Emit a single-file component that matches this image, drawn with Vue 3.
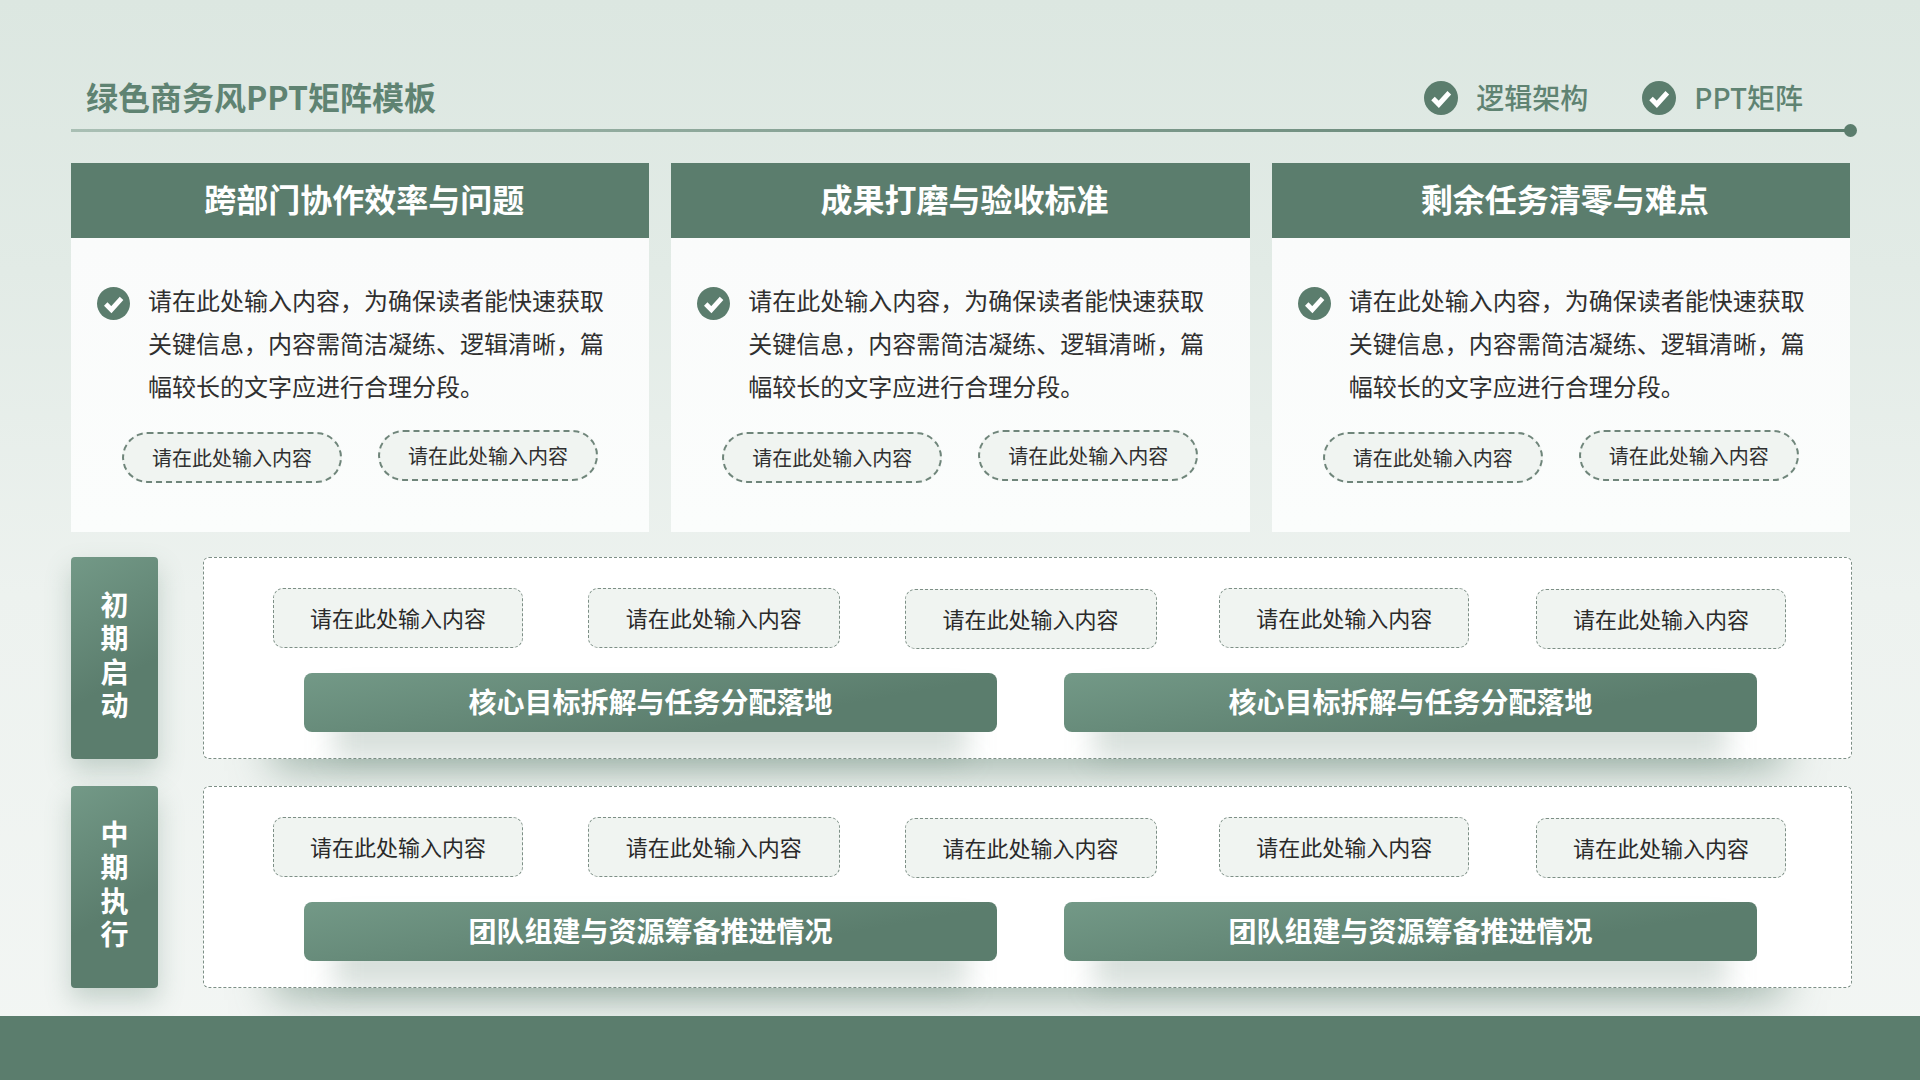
<template>
  <div class="page">
    <div class="top">
      <div class="header">
        <h1 class="title">绿色商务风PPT矩阵模板</h1>
        <div class="tags">
          <div v-for="tag in tags" :key="tag" class="tag">
            <svg class="check tag-check" viewBox="0 0 34 34">
              <circle cx="17" cy="17" r="17" fill="#5b7d6d" />
              <path d="M9 17.5l5.8 5.8 10.5-11.5" fill="none" stroke="#fff" stroke-width="5" />
            </svg>
            <span>{{ tag }}</span>
          </div>
        </div>
      </div>
      <div class="header-line"></div>
    </div>

    <div class="cards">
      <div v-for="card in cards" :key="card" class="card">
        <div class="card-head">{{ card }}</div>
        <div class="card-body">
          <div class="desc">
            <svg class="check desc-check" viewBox="0 0 34 34">
              <circle cx="17" cy="17" r="17" fill="#5b7d6d" />
              <path d="M9 17.5l5.8 5.8 10.5-11.5" fill="none" stroke="#fff" stroke-width="5" />
            </svg>
            <p>请在此处输入内容，为确保读者能快速获取关键信息，内容需简洁凝练、逻辑清晰，篇幅较长的文字应进行合理分段。</p>
          </div>
          <div class="pills">
            <span class="pill pill-low">请在此处输入内容</span>
            <span class="pill">请在此处输入内容</span>
          </div>
        </div>
      </div>
    </div>

    <div class="rows">
      <div v-for="row in rows" :key="row.label" class="row">
        <div class="row-label">
          <span>{{ row.label }}</span>
        </div>
        <div class="row-box">
          <div class="items">
            <div v-for="n in 5" :key="n" class="item" :class="'item-' + n">请在此处输入内容</div>
          </div>
          <div class="banners">
            <div class="banner">{{ row.banner }}</div>
            <div class="banner">{{ row.banner }}</div>
          </div>
        </div>
      </div>
    </div>

    <div class="footer"></div>
  </div>
</template>

<script setup>
const tags = ['逻辑架构', 'PPT矩阵']

const cards = ['跨部门协作效率与问题', '成果打磨与验收标准', '剩余任务清零与难点']

const rows = [
  { label: '初期启动', banner: '核心目标拆解与任务分配落地' },
  { label: '中期执行', banner: '团队组建与资源筹备推进情况' }
]
</script>

<style>
html,
body {
  margin: 0;
  background: #eef3f0;
}
</style>

<style scoped>
.page {
  position: relative;
  width: 1920px;
  height: 1080px;
  overflow: hidden;
  display: flex;
  flex-direction: column;
  background: linear-gradient(180deg, #dce7e1 0%, #e2ebe6 25%, #edf2ef 55%, #f3f6f4 100%);
  font-family: "Noto Sans CJK SC", "Noto Sans", sans-serif;
  text-spacing-trim: space-all;
}

.top {
  margin: 0 69px 0 71px;
  padding-top: 70px;
}

.header {
  height: 59px;
  display: flex;
  justify-content: space-between;
  padding: 0 48px 0 15px;
}

.title {
  margin: 0;
  font-size: 32px;
  font-weight: 700;
  line-height: 52px;
  color: #5f8372;
}

.tags {
  display: flex;
  gap: 54px;
}

.tag {
  display: flex;
  align-items: center;
  gap: 18px;
  height: 56px;
  font-size: 28px;
  font-weight: 500;
  color: #5f8372;
}

.tag span {
  padding-bottom: 2px;
}

.check {
  display: block;
  flex-shrink: 0;
}

.tag-check {
  width: 34px;
  height: 34px;
}

.header-line {
  position: relative;
  height: 3px;
  background: linear-gradient(90deg, #a9bfb4 0%, #5b7d6d 100%);
}

.header-line::after {
  content: "";
  position: absolute;
  right: -6px;
  top: -5px;
  width: 13px;
  height: 13px;
  border-radius: 50%;
  background: #5b7d6d;
}

.cards {
  margin: 31px 70px 0 71px;
  display: flex;
  gap: 22px;
}

.card {
  flex: 1;
  height: 369px;
  display: flex;
  flex-direction: column;
}

.card-head {
  height: 75px;
  padding: 0 0 5px 8px;
  box-sizing: border-box;
  display: flex;
  align-items: center;
  justify-content: center;
  background: #5b7d6d;
  color: #fff;
  font-size: 32px;
  font-weight: 700;
}

.card-body {
  flex: 1;
  padding: 40px 0 0 26px;
  background: linear-gradient(180deg, #fafbfb 0%, #fbfdfc 100%);
}

.desc {
  display: flex;
  gap: 18px;
}

.desc p {
  margin: 0;
  width: 460px;
  font-size: 24px;
  line-height: 43px;
  color: #2f2f2f;
}

.desc-check {
  width: 33px;
  height: 33px;
  margin-top: 9px;
}

.pills {
  display: flex;
  gap: 36px;
  margin: 23px 0 0 25px;
}

.pill {
  width: 220px;
  height: 51px;
  box-sizing: border-box;
  border: 2px dashed #6f857a;
  border-radius: 26px;
  background: #f0f4f1;
  display: flex;
  align-items: center;
  justify-content: center;
  font-size: 20px;
  color: #2f2f2f;
}

.pill-low {
  margin-top: 2px;
}

.rows {
  margin: 25px 70px 0 71px;
  display: flex;
  flex-direction: column;
  gap: 27px;
}

.row {
  height: 202px;
  display: flex;
  gap: 45px;
}

.row-label {
  width: 87px;
  flex-shrink: 0;
  border-radius: 4px;
  background: linear-gradient(150deg, #739987 0%, #5b7d6d 60%);
  box-shadow: 0 12px 26px rgba(91, 125, 109, 0.3);
  display: flex;
  align-items: center;
  justify-content: center;
  color: #fff;
  font-size: 28px;
  font-weight: 700;
}

.row-label span {
  writing-mode: vertical-rl;
  text-orientation: upright;
  letter-spacing: 5.5px;
}

.row-box {
  position: relative;
  z-index: 0;
  flex: 1;
  box-sizing: border-box;
  padding: 30px 65px 0 69px;
  border: 1px dashed #7d8f86;
  border-radius: 6px;
  background: #fff;
  box-shadow: 0 82px 40px -70px rgba(91, 125, 109, 0.5);
}

.items {
  display: flex;
  justify-content: space-between;
  align-items: flex-start;
}

.item {
  width: 250px;
  height: 60px;
  box-sizing: border-box;
  padding-bottom: 3px;
  border: 1px dashed #7d8f86;
  border-radius: 10px;
  background: #f0f4f1;
  display: flex;
  align-items: center;
  justify-content: center;
  font-size: 22px;
  color: #2a2a2a;
}

.item-2,
.item-3 {
  width: 252px;
}

.item-3,
.item-5 {
  margin-top: 1px;
}

.item-4 {
  position: relative;
  left: -2px;
}

.banners {
  display: flex;
  gap: 67px;
  margin: 24px 29px 0 31px;
}

.banner {
  position: relative;
  width: 693px;
  height: 59px;
  box-sizing: border-box;
  padding-bottom: 4px;
  border-radius: 8px;
  background: linear-gradient(170deg, #739987 0%, #5b7d6d 70%);
  display: flex;
  align-items: center;
  justify-content: center;
  color: #fff;
  font-size: 28px;
  font-weight: 700;
}

.banner::after {
  content: "";
  position: absolute;
  z-index: -1;
  left: 30px;
  right: 30px;
  top: 24px;
  height: 64px;
  background: rgba(91, 125, 109, 0.24);
  filter: blur(14px);
}

.footer {
  position: absolute;
  left: 0;
  right: 0;
  bottom: 0;
  height: 64px;
  background: #5b7d6d;
}
</style>
